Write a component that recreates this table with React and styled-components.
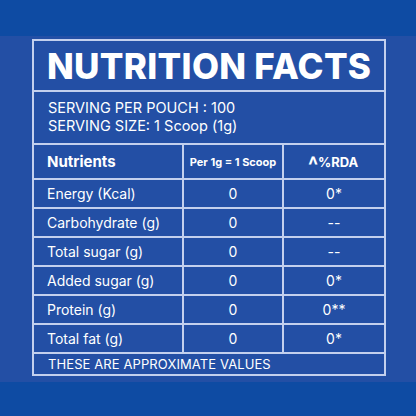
import React from "react";
import styled, { createGlobalStyle } from "styled-components";

const Global = createGlobalStyle`
  html, body { margin: 0; padding: 0; }
  body { font-family: Inter, "Liberation Sans", sans-serif; }
`;

const Page = styled.div`
  width: 416px;
  height: 416px;
  display: flex;
  flex-direction: column;
  background: #0e4ba3;
`;

const Band = styled.div`
  height: ${(p) => p.$h}px;
  flex: none;
  background: #0e4ba3;
`;

const Middle = styled.div`
  height: 346px;
  flex: none;
  background: #234fa5;
  padding: 3px 0 0 32px;
  box-sizing: border-box;
`;

const Box = styled.div`
  width: 354px;
  height: 337px;
  box-sizing: border-box;
  border: 2px solid #c3d0ee;
  display: flex;
  flex-direction: column;
  color: #ffffff;
`;

const Title = styled.div`
  height: 51px;
  box-sizing: border-box;
  border-bottom: 2px solid #c3d0ee;
  display: flex;
  align-items: center;
  padding-left: 13px;
  font-weight: 800;
  font-size: 35px;
  letter-spacing: 0.3px;
  padding-top: 1px;
`;

const Serving = styled.div`
  height: 53px;
  box-sizing: border-box;
  border-bottom: 2px solid #c3d0ee;
  padding: 7px 0 0 14px;
  font-size: 14.5px;
  line-height: 18px;
  font-weight: 400;
`;

const Grid = styled.div`
  display: grid;
  grid-template-columns: 150px 100px 1fr;
  grid-template-rows: ${(p) => p.$rows};
`;

const Cell = styled.div`
  box-sizing: border-box;
  display: flex;
  align-items: center;
  justify-content: ${(p) => (p.$left ? "flex-start" : "center")};
  padding-left: ${(p) => (p.$left ? "13px" : "0")};
  border-bottom: 2px solid #c3d0ee;
  border-right: ${(p) => (p.$last ? "none" : "2px solid #c3d0ee")};
  font-size: 14px;
  font-weight: 400;
`;

const HeadCell = styled(Cell)`
  font-weight: 700;
  font-size: ${(p) => p.$size || 15}px;
`;

const Caret = styled.span`
  display: inline-block;
  transform: scale(1.6, 2) translateY(1.6px);
  margin-right: 2px;
`;

const Footer = styled.div`
  flex: 1;
  display: flex;
  align-items: center;
  padding-left: 14px;
  font-size: 13px;
  letter-spacing: 0.1px;
`;

const rows = [
  ["Energy (Kcal)", "0", "0*"],
  ["Carbohydrate (g)", "0", "--"],
  ["Total sugar (g)", "0", "--"],
  ["Added sugar (g)", "0", "0*"],
  ["Protein (g)", "0", "0**"],
  ["Total fat (g)", "0", "0*"],
];

export default function App() {
  return (
    <>
      <Global />
      <Page>
        <Band $h={36} />
        <Middle>
          <Box>
            <Title>NUTRITION FACTS</Title>
            <Serving>
              <div>SERVING PER POUCH : 100</div>
              <div>SERVING SIZE: 1 Scoop (1g)</div>
            </Serving>
            <Grid $rows="35px repeat(6, 29px)">
              <HeadCell $left $size={15}>Nutrients</HeadCell>
              <HeadCell $size={11}>Per 1g = 1 Scoop</HeadCell>
              <HeadCell $size={13} $last>
                <Caret>^</Caret>%RDA
              </HeadCell>
              {rows.map((r) => (
                <React.Fragment key={r[0]}>
                  <Cell $left>{r[0]}</Cell>
                  <Cell>{r[1]}</Cell>
                  <Cell $last>{r[2]}</Cell>
                </React.Fragment>
              ))}
            </Grid>
            <Footer>THESE ARE APPROXIMATE VALUES</Footer>
          </Box>
        </Middle>
        <Band $h={34} />
      </Page>
    </>
  );
}
